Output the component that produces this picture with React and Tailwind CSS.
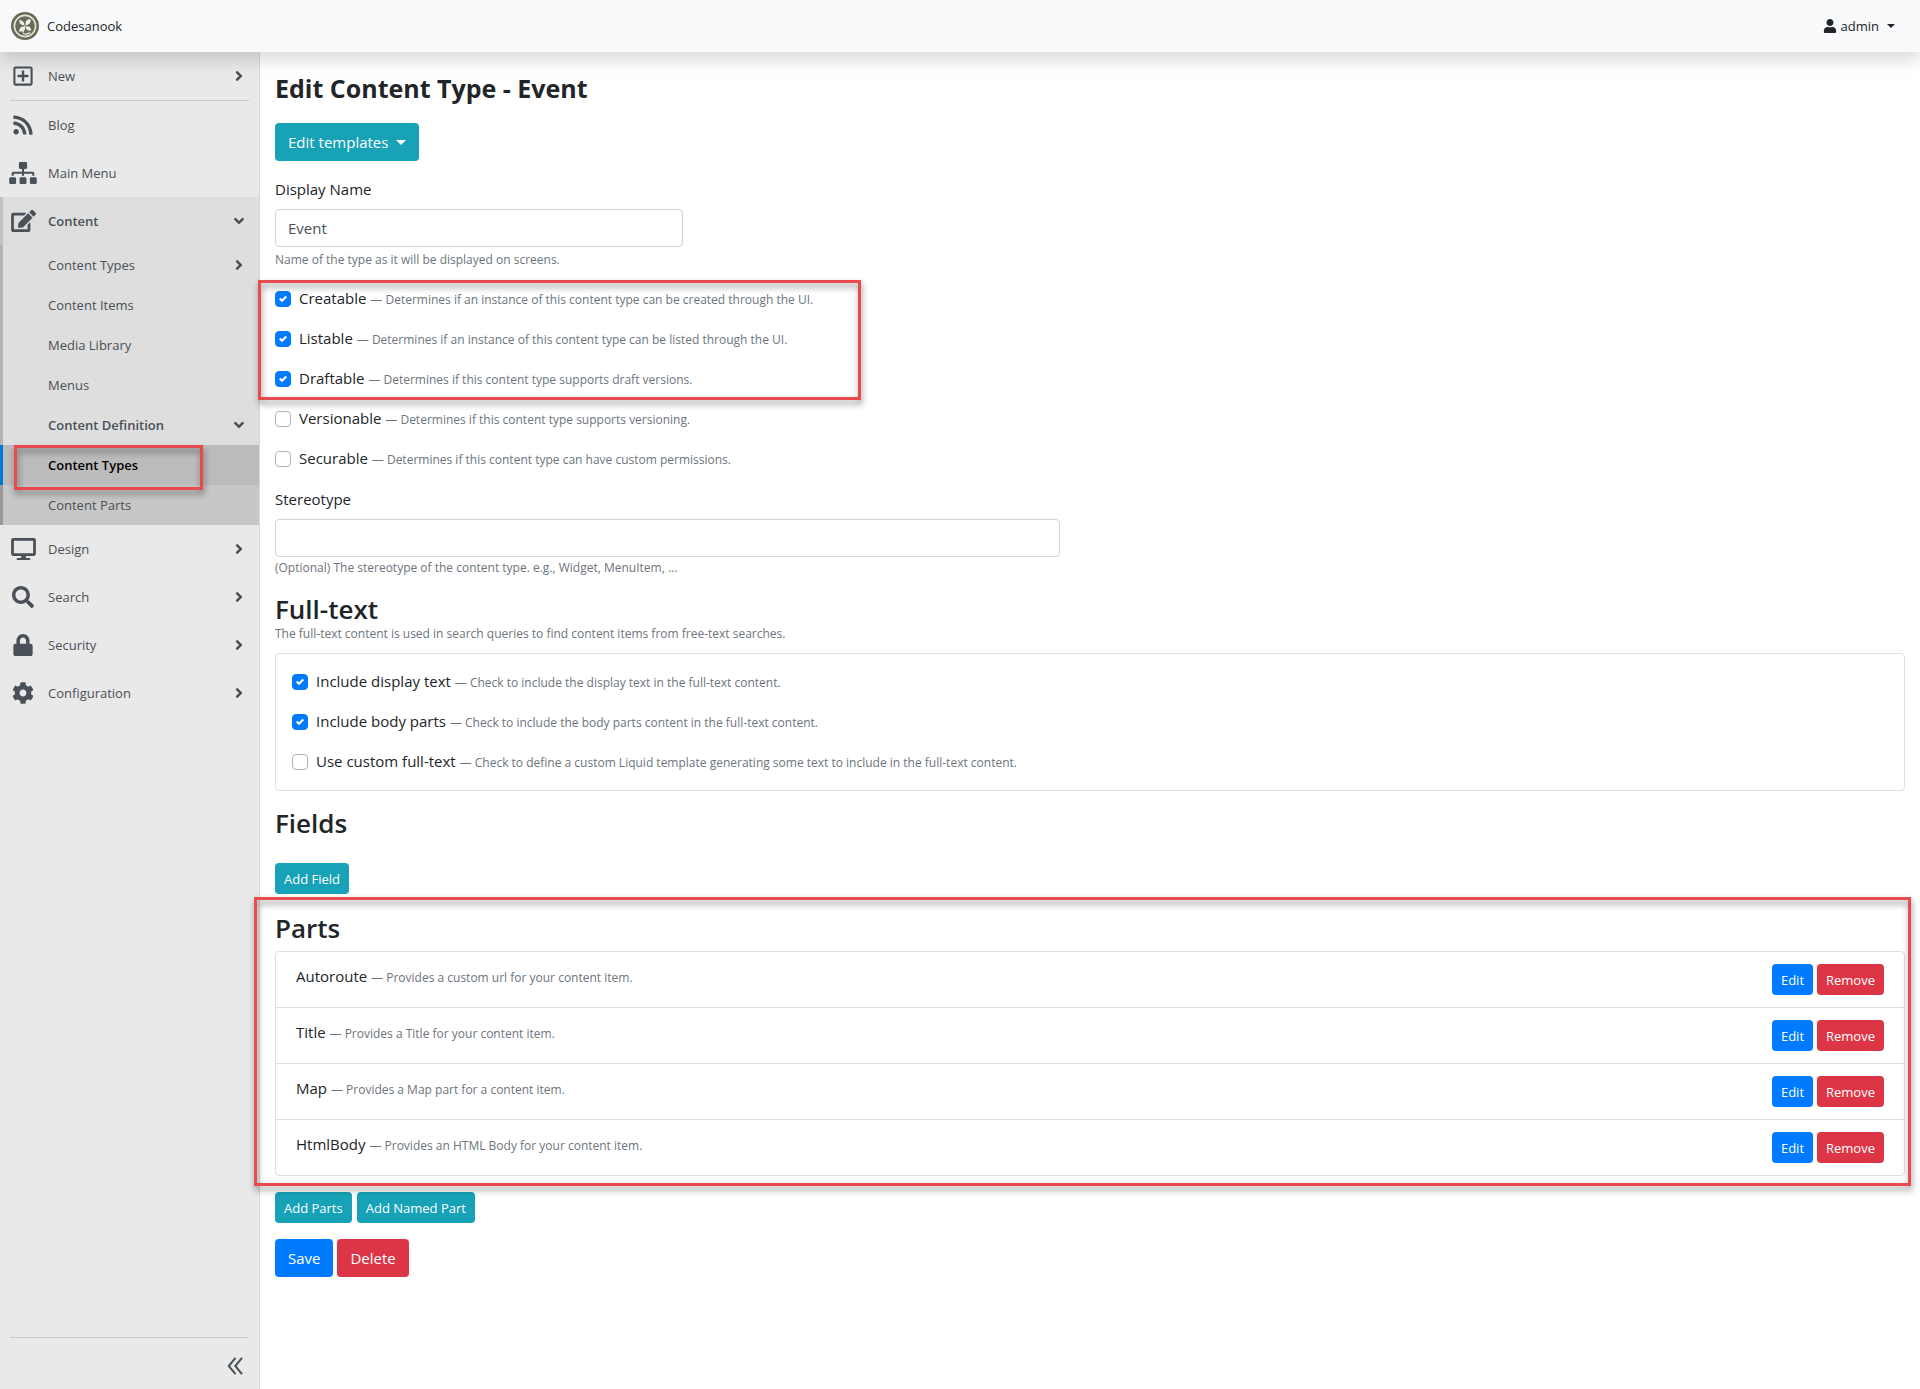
import React from "react";
import { FaRegPlusSquare, FaRss, FaSitemap, FaEdit, FaDesktop, FaSearch, FaLock, FaCog, FaUser, FaAngleRight, FaAngleDown } from "react-icons/fa";

function Caret({ className = "border-x-4 border-t-4" }) {
  return <span aria-hidden="true" className={`border-x-transparent border-t-current ${className}`} />;
}

function Highlight({ className }) {
  return (
    <div
      aria-hidden="true"
      className={`pointer-events-none absolute z-20 border-[3px] border-[#e84b4d] drop-shadow-[1px_4px_3px_rgba(0,0,0,0.45)] ${className}`}
    />
  );
}

function Logo() {
  return (
    <svg viewBox="0 0 28 28" className="size-7" aria-hidden="true">
      <circle cx="14" cy="14" r="14" fill="#686c56" />
      <circle cx="14" cy="14" r="10.6" fill="none" stroke="#e6e8dc" strokeWidth="1.6" />
      <path d="M13.4 13.2C10 13.400 7.800 11.200 8.400 8c3 .2 4.900 2 5 5.200zM14.600 13.200c-.6-3.600 1.200-6 4.800-6.200.8 3.600-1 6-4.800 6.200zM13.200 14.400c.2 3.600-1.400 5.400-5 5.200-.2-3.200 1.600-5.200 5-5.200zM14.800 14.400c3.400-.4 5.200.8 5.400 4.200-3 .6-5.200-.8-5.400-4.200z" fill="#f1f2ea" />
      <path d="M14 13.500c0 2.800-.6 4.800-2.400 7M12 21.500c2.600 1 5.200.6 7-1" fill="none" stroke="#f1f2ea" strokeWidth="1.200" />
    </svg>
  );
}

function Chevron({ open }) {
  return open ? <FaAngleDown className="size-4" /> : <FaAngleRight className="size-4" />;
}

function NavItem({ icon: Icon, iconWidth = "w-[22px]", label, chevron, open }) {
  return (
    <a
      href="#"
      className={`flex h-12 items-center gap-[11px] border-l-[3px] pr-3 pl-1.5 text-[13px] text-[#495057] ${open ? "border-[#c2c2c2] bg-[#dedede] font-semibold" : "border-transparent"}`}
    >
      <span className="flex w-7 shrink-0 justify-center">
        <Icon className={`h-[22px] shrink-0 ${iconWidth}`} />
      </span>
      <span className="flex-1">{label}</span>
      {chevron && <Chevron open={open} />}
    </a>
  );
}

function SubItem({ label, chevron, open, className = "border-[#b4b4b4] bg-[#dedede]" }) {
  return (
    <a href="#" className={`flex h-10 items-center border-l-[3px] pr-3 pl-[45px] text-[13px] text-[#495057] ${className} ${open ? "font-semibold" : ""}`}>
      <span className="flex-1">{label}</span>
      {chevron && <Chevron open={open} />}
    </a>
  );
}

function Hint({ children }) {
  return <span className="text-[12px] text-[#6c757d]">{children}</span>;
}

function CheckRow({ id, label, hint, checked }) {
  return (
    <div className="flex h-6 items-center gap-2">
      <span className="grid size-4 place-items-center">
        <input
          id={id}
          type="checkbox"
          defaultChecked={checked}
          className="peer col-start-1 row-start-1 size-4 appearance-none rounded border border-[#adb5bd] bg-white checked:border-[#007bff] checked:bg-[#007bff]"
        />
        <svg viewBox="0 0 8 8" aria-hidden="true" className="pointer-events-none invisible col-start-1 row-start-1 size-2 peer-checked:visible">
          <path fill="#fff" d="M6.564.75l-3.590 3.612-1.538-1.550L0 4.260 2.974 7.250 8 2.193z" />
        </svg>
      </span>
      <label htmlFor={id} className="text-[15px]">
        {label} <Hint>— {hint}</Hint>
      </label>
    </div>
  );
}

const button = "inline-flex items-center justify-center rounded text-white";
const large = `${button} h-[38px] px-[13px] text-[15px]`;
const small = `${button} h-[31px] px-[9px] text-[13px]`;

const parts = [
  ["Autoroute", "Provides a custom url for your content item."],
  ["Title", "Provides a Title for your content item."],
  ["Map", "Provides a Map part for a content item."],
  ["HtmlBody", "Provides an HTML Body for your content item."],
];

export default function App() {
  return (
    <div className="flex min-h-screen flex-col bg-white font-['Open_Sans',sans-serif] text-[15px] leading-6 text-[#212529]">
      <header className="relative z-10 flex h-[52px] items-center justify-between bg-[#f8f9fa] pr-[25px] pl-[11px] text-[13px] shadow-[0_8px_16px_rgba(0,0,0,0.15)]">
        <a href="#" className="flex items-center gap-2"><Logo />Codesanook</a>
        <button type="button" className="flex items-center gap-1">
          <FaUser className="size-[14px]" />admin
          <span className="ml-1 flex"><Caret /></span>
        </button>
      </header>

      <div className="flex flex-1">
        <aside className="flex w-[260px] shrink-0 flex-col border-r border-[#d9d9d9] bg-[#e9e9e9]">
          <nav aria-label="Administration">
            <NavItem icon={FaRegPlusSquare} label="New" chevron />
            <hr className="mx-2.5 border-[#cacaca]" />
            <NavItem icon={FaRss} label="Blog" />
            <NavItem icon={FaSitemap} iconWidth="w-7" label="Main Menu" />
            <NavItem icon={FaEdit} iconWidth="w-[25px]" label="Content" chevron open />
            <SubItem label="Content Types" chevron />
            <SubItem label="Content Items" />
            <SubItem label="Media Library" />
            <SubItem label="Menus" />
            <SubItem label="Content Definition" chevron open />
            <div className="relative">
              <SubItem label="Content Types" className="border-[#0078d4] bg-[#bbbbbb] font-semibold text-black" />
              <Highlight className="top-0 left-[14px] h-[45px] w-[189px]" />
            </div>
            <SubItem label="Content Parts" className="border-[#999999] bg-[#c7c7c7]" />
            <NavItem icon={FaDesktop} iconWidth="w-[25px]" label="Design" chevron />
            <NavItem icon={FaSearch} label="Search" chevron />
            <NavItem icon={FaLock} label="Security" chevron />
            <NavItem icon={FaCog} label="Configuration" chevron />
          </nav>
          <div className="mx-2.5 mt-auto flex h-[52px] items-center justify-end border-t border-[#cacaca] pt-1 pr-1.5">
            <button type="button" aria-label="Collapse menu" className="text-[#495057]">
              <svg viewBox="0 0 16 18" className="h-[18px] w-4" fill="none" stroke="currentColor" strokeWidth="2" aria-hidden="true">
                <path d="M8.500 .8 1.800 9l6.700 8.200M15 .8 8.300 9l6.700 8.200" />
              </svg>
            </button>
          </div>
        </aside>

        <main className="min-w-0 flex-1 px-[15px] pt-5">
          <h1 className="text-[25px] leading-8 font-bold">Edit Content Type - Event</h1>
          <button type="button" className={`${large} mt-[19px] gap-2 bg-[#17a2b8]`}>
            Edit templates <Caret className="border-x-5 border-t-5" />
          </button>
          <form onSubmit={(e) => e.preventDefault()}>
            <div className="mt-4">
              <label htmlFor="display" className="block">Display Name</label>
              <input id="display" defaultValue="Event" className="mt-2 block h-[38px] w-full max-w-[408px] rounded border border-[#ced4da] px-3 text-[#495057]" />
              <p className="mt-1 text-[12px] leading-[18px] text-[#6c757d]">Name of the type as it will be displayed on screens.</p>
            </div>

            <div className="relative mt-[18px] flex w-fit flex-col gap-4">
              <CheckRow id="creatable" label="Creatable" checked hint="Determines if an instance of this content type can be created through the UI." />
              <CheckRow id="listable" label="Listable" checked hint="Determines if an instance of this content type can be listed through the UI." />
              <CheckRow id="draftable" label="Draftable" checked hint="Determines if this content type supports draft versions." />
              <Highlight className="-top-[7px] -left-[17px] h-[120px] w-[603px]" />
            </div>
            <div className="mt-4 flex flex-col gap-4">
              <CheckRow id="versionable" label="Versionable" hint="Determines if this content type supports versioning." />
              <CheckRow id="securable" label="Securable" hint="Determines if this content type can have custom permissions." />
            </div>

            <div className="mt-4">
              <label htmlFor="stereotype" className="block">Stereotype</label>
              <input id="stereotype" className="mt-2 block h-[38px] w-full max-w-[785px] rounded border border-[#ced4da] px-3 text-[#495057]" />
              <p className="mt-0.5 text-[12px] leading-[18px] text-[#6c757d]">(Optional) The stereotype of the content type. e.g., Widget, MenuItem, ...</p>
            </div>

            <h3 className="mt-4 text-[26px] leading-8 font-semibold">Full-text</h3>
            <p className="text-[12px] leading-[18px] text-[#6c757d]">The full-text content is used in search queries to find content items from free-text searches.</p>
            <div className="mt-2.5 flex flex-col gap-4 rounded border border-[#dfdfdf] px-4 py-4">
              <CheckRow id="include-display" label="Include display text" checked hint="Check to include the display text in the full-text content." />
              <CheckRow id="include-body" label="Include body parts" checked hint="Check to include the body parts content in the full-text content." />
              <CheckRow id="custom" label="Use custom full-text" hint="Check to define a custom Liquid template generating some text to include in the full-text content." />
            </div>

            <h3 className="mt-4 text-[26px] leading-8 font-semibold">Fields</h3>
            <button type="button" className={`${small} mt-6 bg-[#17a2b8]`}>Add Field</button>

            <section className="relative mt-[18px]">
              <h3 className="text-[26px] leading-8 font-semibold">Parts</h3>
              <ul className="mt-[7px] divide-y divide-[#dfdfdf] rounded border border-[#dfdfdf]">
                {parts.map(([name, text]) => (
                  <li key={name} className="flex justify-between px-5 py-3">
                    <span>{name} <Hint>— {text}</Hint></span>
                    <span className="flex gap-1">
                      <button type="button" className={`${small} bg-[#007bff]`}>Edit</button>
                      <button type="button" className={`${small} bg-[#dc3545]`}>Remove</button>
                    </span>
                  </li>
                ))}
              </ul>
              <Highlight className="-top-[15px] -right-1.5 -bottom-2.5 -left-[21px]" />
            </section>

            <div className="mt-4 flex gap-[5px]">
              <button type="button" className={`${small} bg-[#17a2b8]`}>Add Parts</button>
              <button type="button" className={`${small} bg-[#17a2b8]`}>Add Named Part</button>
            </div>
            <div className="mt-4 flex gap-1">
              <button type="submit" className={`${large} bg-[#007bff]`}>Save</button>
              <button type="button" className={`${large} bg-[#dc3545]`}>Delete</button>
            </div>
          </form>
        </main>
      </div>
    </div>
  );
}
